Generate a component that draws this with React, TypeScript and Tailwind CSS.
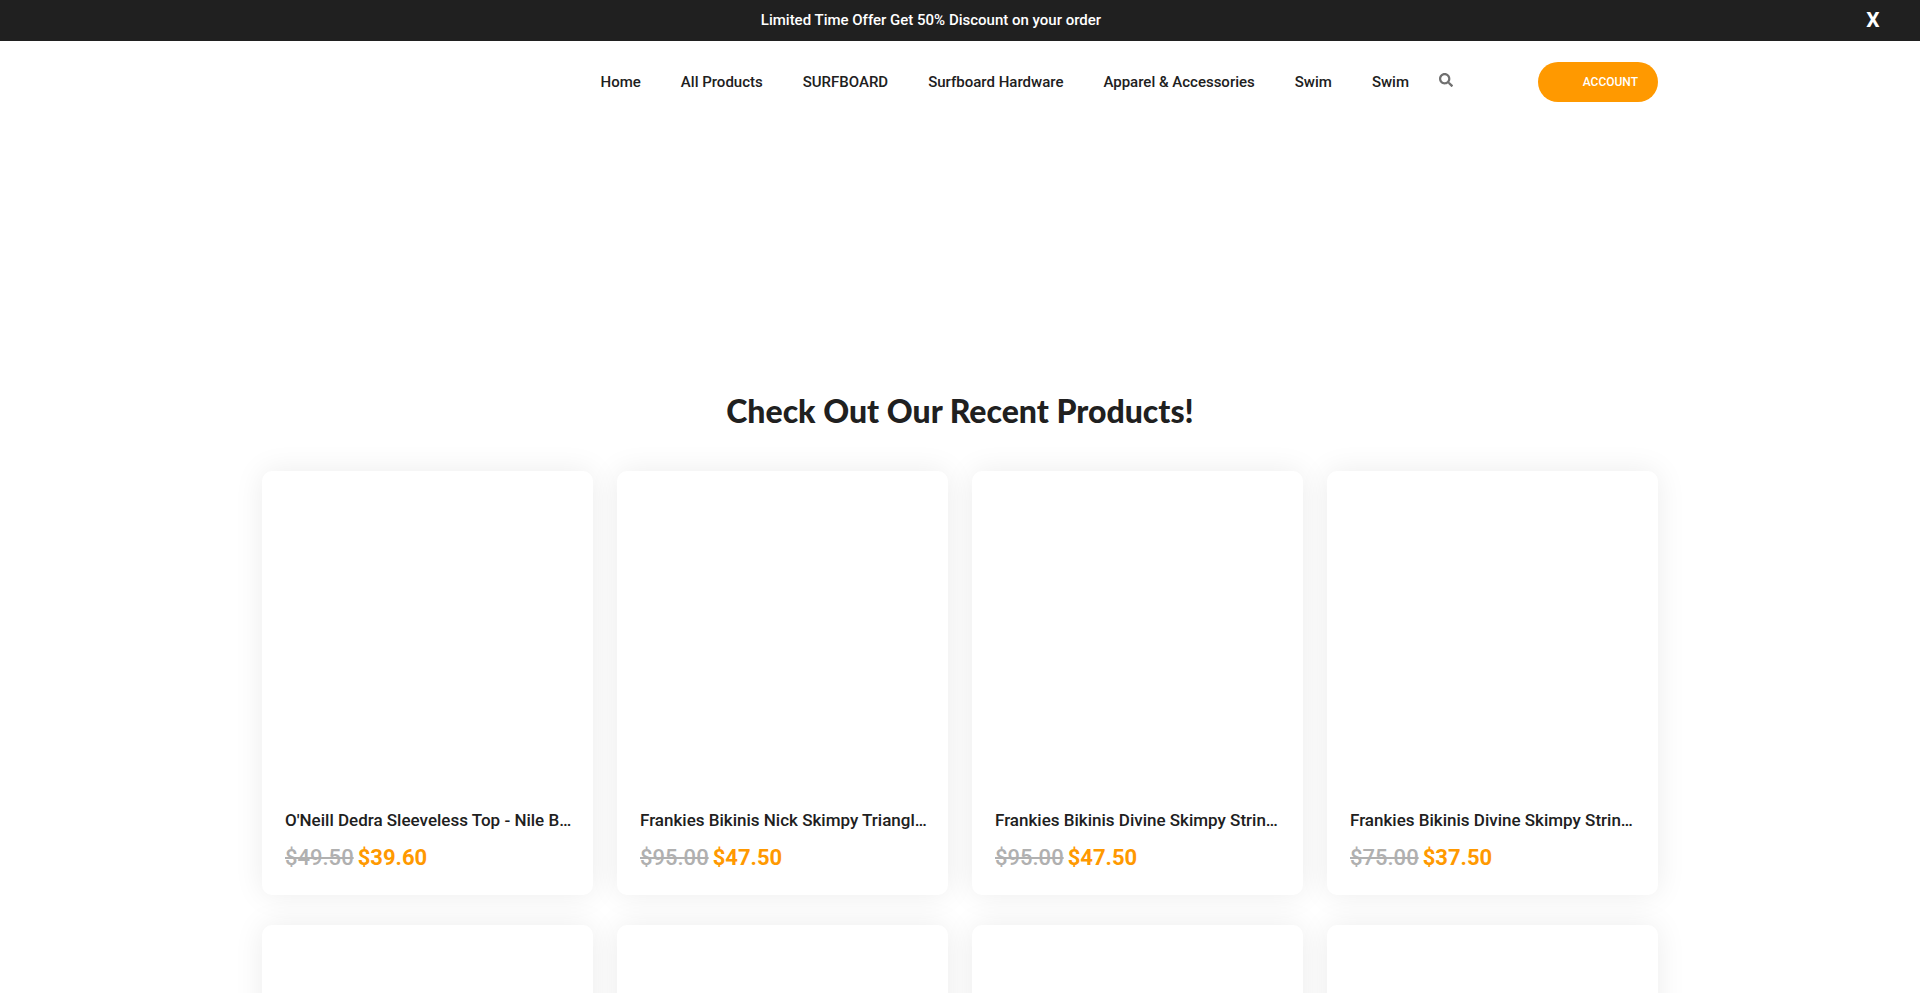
import React from "react";
import { FaSearch } from "react-icons/fa";

type Product = {
    id: number;
    title: string;
    oldPrice: string;
    price: string;
};

const navItems = [
    "Home",
    "All Products",
    "SURFBOARD",
    "Surfboard Hardware",
    "Apparel & Accessories",
    "Swim",
    "Swim",
];

const products: Product[] = [
    { id: 1, title: "O'Neill Dedra Sleeveless Top - Nile B…", oldPrice: "$49.50", price: "$39.60" },
    { id: 2, title: "Frankies Bikinis Nick Skimpy Triangl…", oldPrice: "$95.00", price: "$47.50" },
    { id: 3, title: "Frankies Bikinis Divine Skimpy Strin…", oldPrice: "$95.00", price: "$47.50" },
    { id: 4, title: "Frankies Bikinis Divine Skimpy Strin…", oldPrice: "$75.00", price: "$37.50" },
];

// Cards of the next row, whose products have not loaded yet
const pendingCards = [5, 6, 7, 8];

const cardClass = "min-w-0 rounded-[10px] bg-white shadow-[0_0_30px_rgba(0,0,0,0.08)]";

function OfferBar() {
    return (
        <div className="flex h-[41px] items-center bg-[#202020] text-white">
            <p className="flex-1 text-center text-[15px] font-medium">
                Limited Time Offer Get 50% Discount on your order
            </p>
            <button type="button" aria-label="Close" className="mr-9 w-[22px] text-center text-[21px] font-bold">
                X
            </button>
        </div>
    );
}

function Header() {
    return (
        <header className="mx-auto flex h-[82px] max-w-[1396px] items-center justify-end">
            <nav className="flex items-center gap-10 text-[15px] font-medium whitespace-nowrap">
                {navItems.map((item, i) => (
                    <a key={i} href="#">
                        {item}
                    </a>
                ))}
            </nav>
            <button type="button" aria-label="Search" className="ml-[30px] pb-1 text-sm text-[#707070]">
                <FaSearch />
            </button>
            <a
                href="#"
                className="ml-[85px] flex h-10 w-[120px] items-center justify-end rounded-full bg-[#ff9900] pr-5 text-xs font-medium text-white">
                ACCOUNT
            </a>
        </header>
    );
}

function ProductCard({ product }: { product: Product }) {
    return (
        <article className={cardClass}>
            <div className="aspect-square" />
            <div className="px-[23px] pt-1.5 pb-[23px]">
                <h3 className="text-[17px] leading-6 font-medium whitespace-nowrap">{product.title}</h3>
                <p className="mt-3 flex gap-1 text-[22px] leading-7">
                    <del className="font-medium text-[#b0b0b0]">{product.oldPrice}</del>
                    <span className="font-bold text-[#ff9900]">{product.price}</span>
                </p>
            </div>
        </article>
    );
}

export default function App() {
    return (
        <div className="bg-white font-[Roboto,'Liberation_Sans',sans-serif] text-[#202020]">
            <OfferBar />
            <Header />
            <main className="mx-auto max-w-[1396px] pt-[264px] pb-10">
                <h2 className="text-center font-[Lato,'Liberation_Sans',sans-serif] text-[32px] leading-12 font-black">
                    Check Out Our Recent Products!
                </h2>
                <div className="mt-9 grid grid-cols-4 gap-x-6 gap-y-[30px]">
                    {products.map((product) => (
                        <ProductCard key={product.id} product={product} />
                    ))}
                    {pendingCards.map((id) => (
                        <article key={id} className={cardClass}>
                            <div className="aspect-square" />
                        </article>
                    ))}
                </div>
            </main>
        </div>
    );
}
